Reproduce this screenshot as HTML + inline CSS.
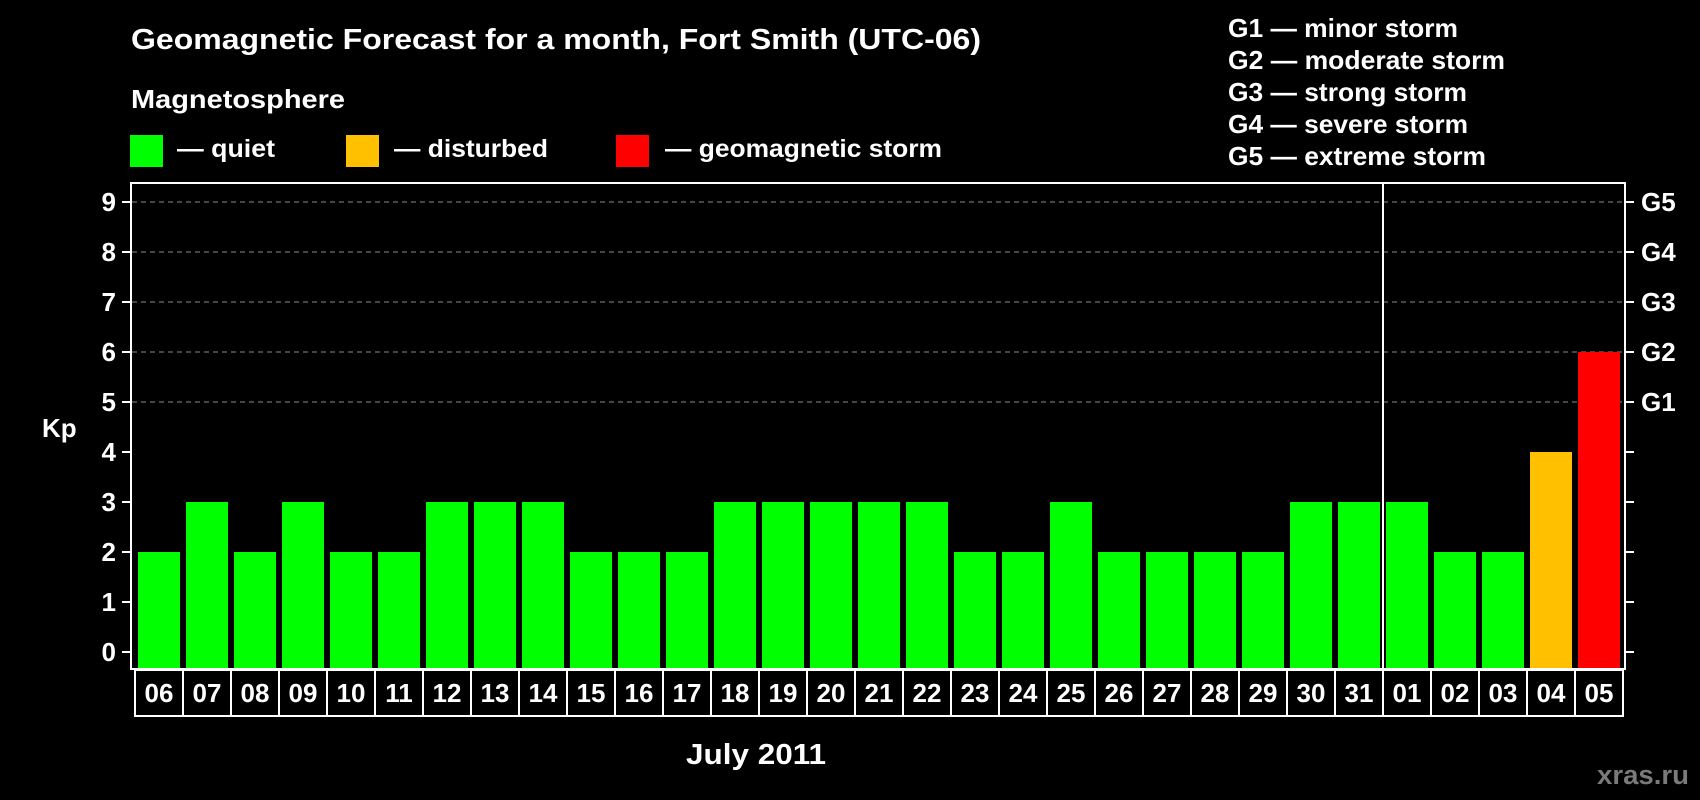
<!DOCTYPE html>
<html><head><meta charset="utf-8"><style>
html,body{margin:0;padding:0;background:#000;width:1700px;height:800px;overflow:hidden}
svg{display:block}
text{font-family:"Liberation Sans",Arial,sans-serif;font-weight:bold;fill:#fff}
</style></head><body>
<svg width="1700" height="800" viewBox="0 0 1700 800" xmlns="http://www.w3.org/2000/svg">
<rect width="1700" height="800" fill="#000"/>
<text x="131" y="49" font-size="29" textLength="850" lengthAdjust="spacingAndGlyphs">Geomagnetic Forecast for a month, Fort Smith (UTC-06)</text>
<text x="131" y="108" font-size="26" textLength="214" lengthAdjust="spacingAndGlyphs">Magnetosphere</text>
<rect x="130" y="135" width="33" height="32" fill="#00ff00"/>
<text x="177" y="157" font-size="25" textLength="98" lengthAdjust="spacingAndGlyphs">— quiet</text>
<rect x="346" y="135" width="33" height="32" fill="#ffc000"/>
<text x="394" y="157" font-size="25" textLength="154" lengthAdjust="spacingAndGlyphs">— disturbed</text>
<rect x="616" y="135" width="33" height="32" fill="#ff0000"/>
<text x="665" y="157" font-size="25" textLength="277" lengthAdjust="spacingAndGlyphs">— geomagnetic storm</text>
<g font-size="26">
<text x="1228" y="37" textLength="230" lengthAdjust="spacingAndGlyphs">G1 — minor storm</text>
<text x="1228" y="69" textLength="277" lengthAdjust="spacingAndGlyphs">G2 — moderate storm</text>
<text x="1228" y="101" textLength="239" lengthAdjust="spacingAndGlyphs">G3 — strong storm</text>
<text x="1228" y="133" textLength="240" lengthAdjust="spacingAndGlyphs">G4 — severe storm</text>
<text x="1228" y="165" textLength="258" lengthAdjust="spacingAndGlyphs">G5 — extreme storm</text>
</g>
<g stroke="#8a8a8a" stroke-width="1" stroke-dasharray="5,4">
<line x1="132" y1="202" x2="1624" y2="202"/>
<line x1="132" y1="252" x2="1624" y2="252"/>
<line x1="132" y1="302" x2="1624" y2="302"/>
<line x1="132" y1="352" x2="1624" y2="352"/>
<line x1="132" y1="402" x2="1624" y2="402"/>
</g>
<g fill="#00ff00">
<rect x="138" y="552" width="42" height="116"/>
<rect x="186" y="502" width="42" height="166"/>
<rect x="234" y="552" width="42" height="116"/>
<rect x="282" y="502" width="42" height="166"/>
<rect x="330" y="552" width="42" height="116"/>
<rect x="378" y="552" width="42" height="116"/>
<rect x="426" y="502" width="42" height="166"/>
<rect x="474" y="502" width="42" height="166"/>
<rect x="522" y="502" width="42" height="166"/>
<rect x="570" y="552" width="42" height="116"/>
<rect x="618" y="552" width="42" height="116"/>
<rect x="666" y="552" width="42" height="116"/>
<rect x="714" y="502" width="42" height="166"/>
<rect x="762" y="502" width="42" height="166"/>
<rect x="810" y="502" width="42" height="166"/>
<rect x="858" y="502" width="42" height="166"/>
<rect x="906" y="502" width="42" height="166"/>
<rect x="954" y="552" width="42" height="116"/>
<rect x="1002" y="552" width="42" height="116"/>
<rect x="1050" y="502" width="42" height="166"/>
<rect x="1098" y="552" width="42" height="116"/>
<rect x="1146" y="552" width="42" height="116"/>
<rect x="1194" y="552" width="42" height="116"/>
<rect x="1242" y="552" width="42" height="116"/>
<rect x="1290" y="502" width="42" height="166"/>
<rect x="1338" y="502" width="42" height="166"/>
<rect x="1386" y="502" width="42" height="166"/>
<rect x="1434" y="552" width="42" height="116"/>
<rect x="1482" y="552" width="42" height="116"/>
</g>
<rect x="1530" y="452" width="42" height="216" fill="#ffc000"/>
<rect x="1578" y="352" width="42" height="316" fill="#ff0000"/>
<line x1="1383" y1="183" x2="1383" y2="668" stroke="#fff" stroke-width="2"/>
<rect x="131" y="183" width="1494" height="486" fill="none" stroke="#fff" stroke-width="2"/>
<g stroke="#fff" stroke-width="2">
<line x1="122" y1="202" x2="131" y2="202"/><line x1="122" y1="252" x2="131" y2="252"/>
<line x1="122" y1="302" x2="131" y2="302"/><line x1="122" y1="352" x2="131" y2="352"/>
<line x1="122" y1="402" x2="131" y2="402"/><line x1="122" y1="452" x2="131" y2="452"/>
<line x1="122" y1="502" x2="131" y2="502"/><line x1="122" y1="552" x2="131" y2="552"/>
<line x1="122" y1="602" x2="131" y2="602"/><line x1="122" y1="652" x2="131" y2="652"/>
<line x1="1625" y1="202" x2="1634" y2="202"/><line x1="1625" y1="252" x2="1634" y2="252"/>
<line x1="1625" y1="302" x2="1634" y2="302"/><line x1="1625" y1="352" x2="1634" y2="352"/>
<line x1="1625" y1="402" x2="1634" y2="402"/><line x1="1625" y1="452" x2="1634" y2="452"/>
<line x1="1625" y1="502" x2="1634" y2="502"/><line x1="1625" y1="552" x2="1634" y2="552"/>
<line x1="1625" y1="602" x2="1634" y2="602"/><line x1="1625" y1="652" x2="1634" y2="652"/>
</g>
<g font-size="26" text-anchor="end">
<text x="116" y="211">9</text><text x="116" y="261">8</text><text x="116" y="311">7</text>
<text x="116" y="361">6</text><text x="116" y="411">5</text><text x="116" y="461">4</text>
<text x="116" y="511">3</text><text x="116" y="561">2</text><text x="116" y="611">1</text>
<text x="116" y="661">0</text>
</g>
<text x="42" y="437" font-size="26">Kp</text>
<g font-size="26">
<text x="1641" y="211">G5</text><text x="1641" y="261">G4</text><text x="1641" y="311">G3</text>
<text x="1641" y="361">G2</text><text x="1641" y="411">G1</text>
</g>
<rect x="135" y="670" width="1488" height="46" fill="none" stroke="#fff" stroke-width="2"/>
<g stroke="#fff" stroke-width="2">
<line x1="183" y1="670" x2="183" y2="716"/><line x1="231" y1="670" x2="231" y2="716"/>
<line x1="279" y1="670" x2="279" y2="716"/><line x1="327" y1="670" x2="327" y2="716"/>
<line x1="375" y1="670" x2="375" y2="716"/><line x1="423" y1="670" x2="423" y2="716"/>
<line x1="471" y1="670" x2="471" y2="716"/><line x1="519" y1="670" x2="519" y2="716"/>
<line x1="567" y1="670" x2="567" y2="716"/><line x1="615" y1="670" x2="615" y2="716"/>
<line x1="663" y1="670" x2="663" y2="716"/><line x1="711" y1="670" x2="711" y2="716"/>
<line x1="759" y1="670" x2="759" y2="716"/><line x1="807" y1="670" x2="807" y2="716"/>
<line x1="855" y1="670" x2="855" y2="716"/><line x1="903" y1="670" x2="903" y2="716"/>
<line x1="951" y1="670" x2="951" y2="716"/><line x1="999" y1="670" x2="999" y2="716"/>
<line x1="1047" y1="670" x2="1047" y2="716"/><line x1="1095" y1="670" x2="1095" y2="716"/>
<line x1="1143" y1="670" x2="1143" y2="716"/><line x1="1191" y1="670" x2="1191" y2="716"/>
<line x1="1239" y1="670" x2="1239" y2="716"/><line x1="1287" y1="670" x2="1287" y2="716"/>
<line x1="1335" y1="670" x2="1335" y2="716"/><line x1="1383" y1="670" x2="1383" y2="716"/>
<line x1="1431" y1="670" x2="1431" y2="716"/><line x1="1479" y1="670" x2="1479" y2="716"/>
<line x1="1527" y1="670" x2="1527" y2="716"/><line x1="1575" y1="670" x2="1575" y2="716"/>
</g>
<g font-size="26" text-anchor="middle">
<text x="159" y="702">06</text><text x="207" y="702">07</text><text x="255" y="702">08</text>
<text x="303" y="702">09</text><text x="351" y="702">10</text><text x="399" y="702">11</text>
<text x="447" y="702">12</text><text x="495" y="702">13</text><text x="543" y="702">14</text>
<text x="591" y="702">15</text><text x="639" y="702">16</text><text x="687" y="702">17</text>
<text x="735" y="702">18</text><text x="783" y="702">19</text><text x="831" y="702">20</text>
<text x="879" y="702">21</text><text x="927" y="702">22</text><text x="975" y="702">23</text>
<text x="1023" y="702">24</text><text x="1071" y="702">25</text><text x="1119" y="702">26</text>
<text x="1167" y="702">27</text><text x="1215" y="702">28</text><text x="1263" y="702">29</text>
<text x="1311" y="702">30</text><text x="1359" y="702">31</text><text x="1407" y="702">01</text>
<text x="1455" y="702">02</text><text x="1503" y="702">03</text><text x="1551" y="702">04</text>
<text x="1599" y="702">05</text>
</g>
<text x="686" y="764" font-size="29" textLength="140" lengthAdjust="spacingAndGlyphs">July 2011</text>
<text x="1597" y="784" font-size="27" textLength="92" lengthAdjust="spacingAndGlyphs" style="fill:#7a7a7a">xras.ru</text>
</svg>
</body></html>
